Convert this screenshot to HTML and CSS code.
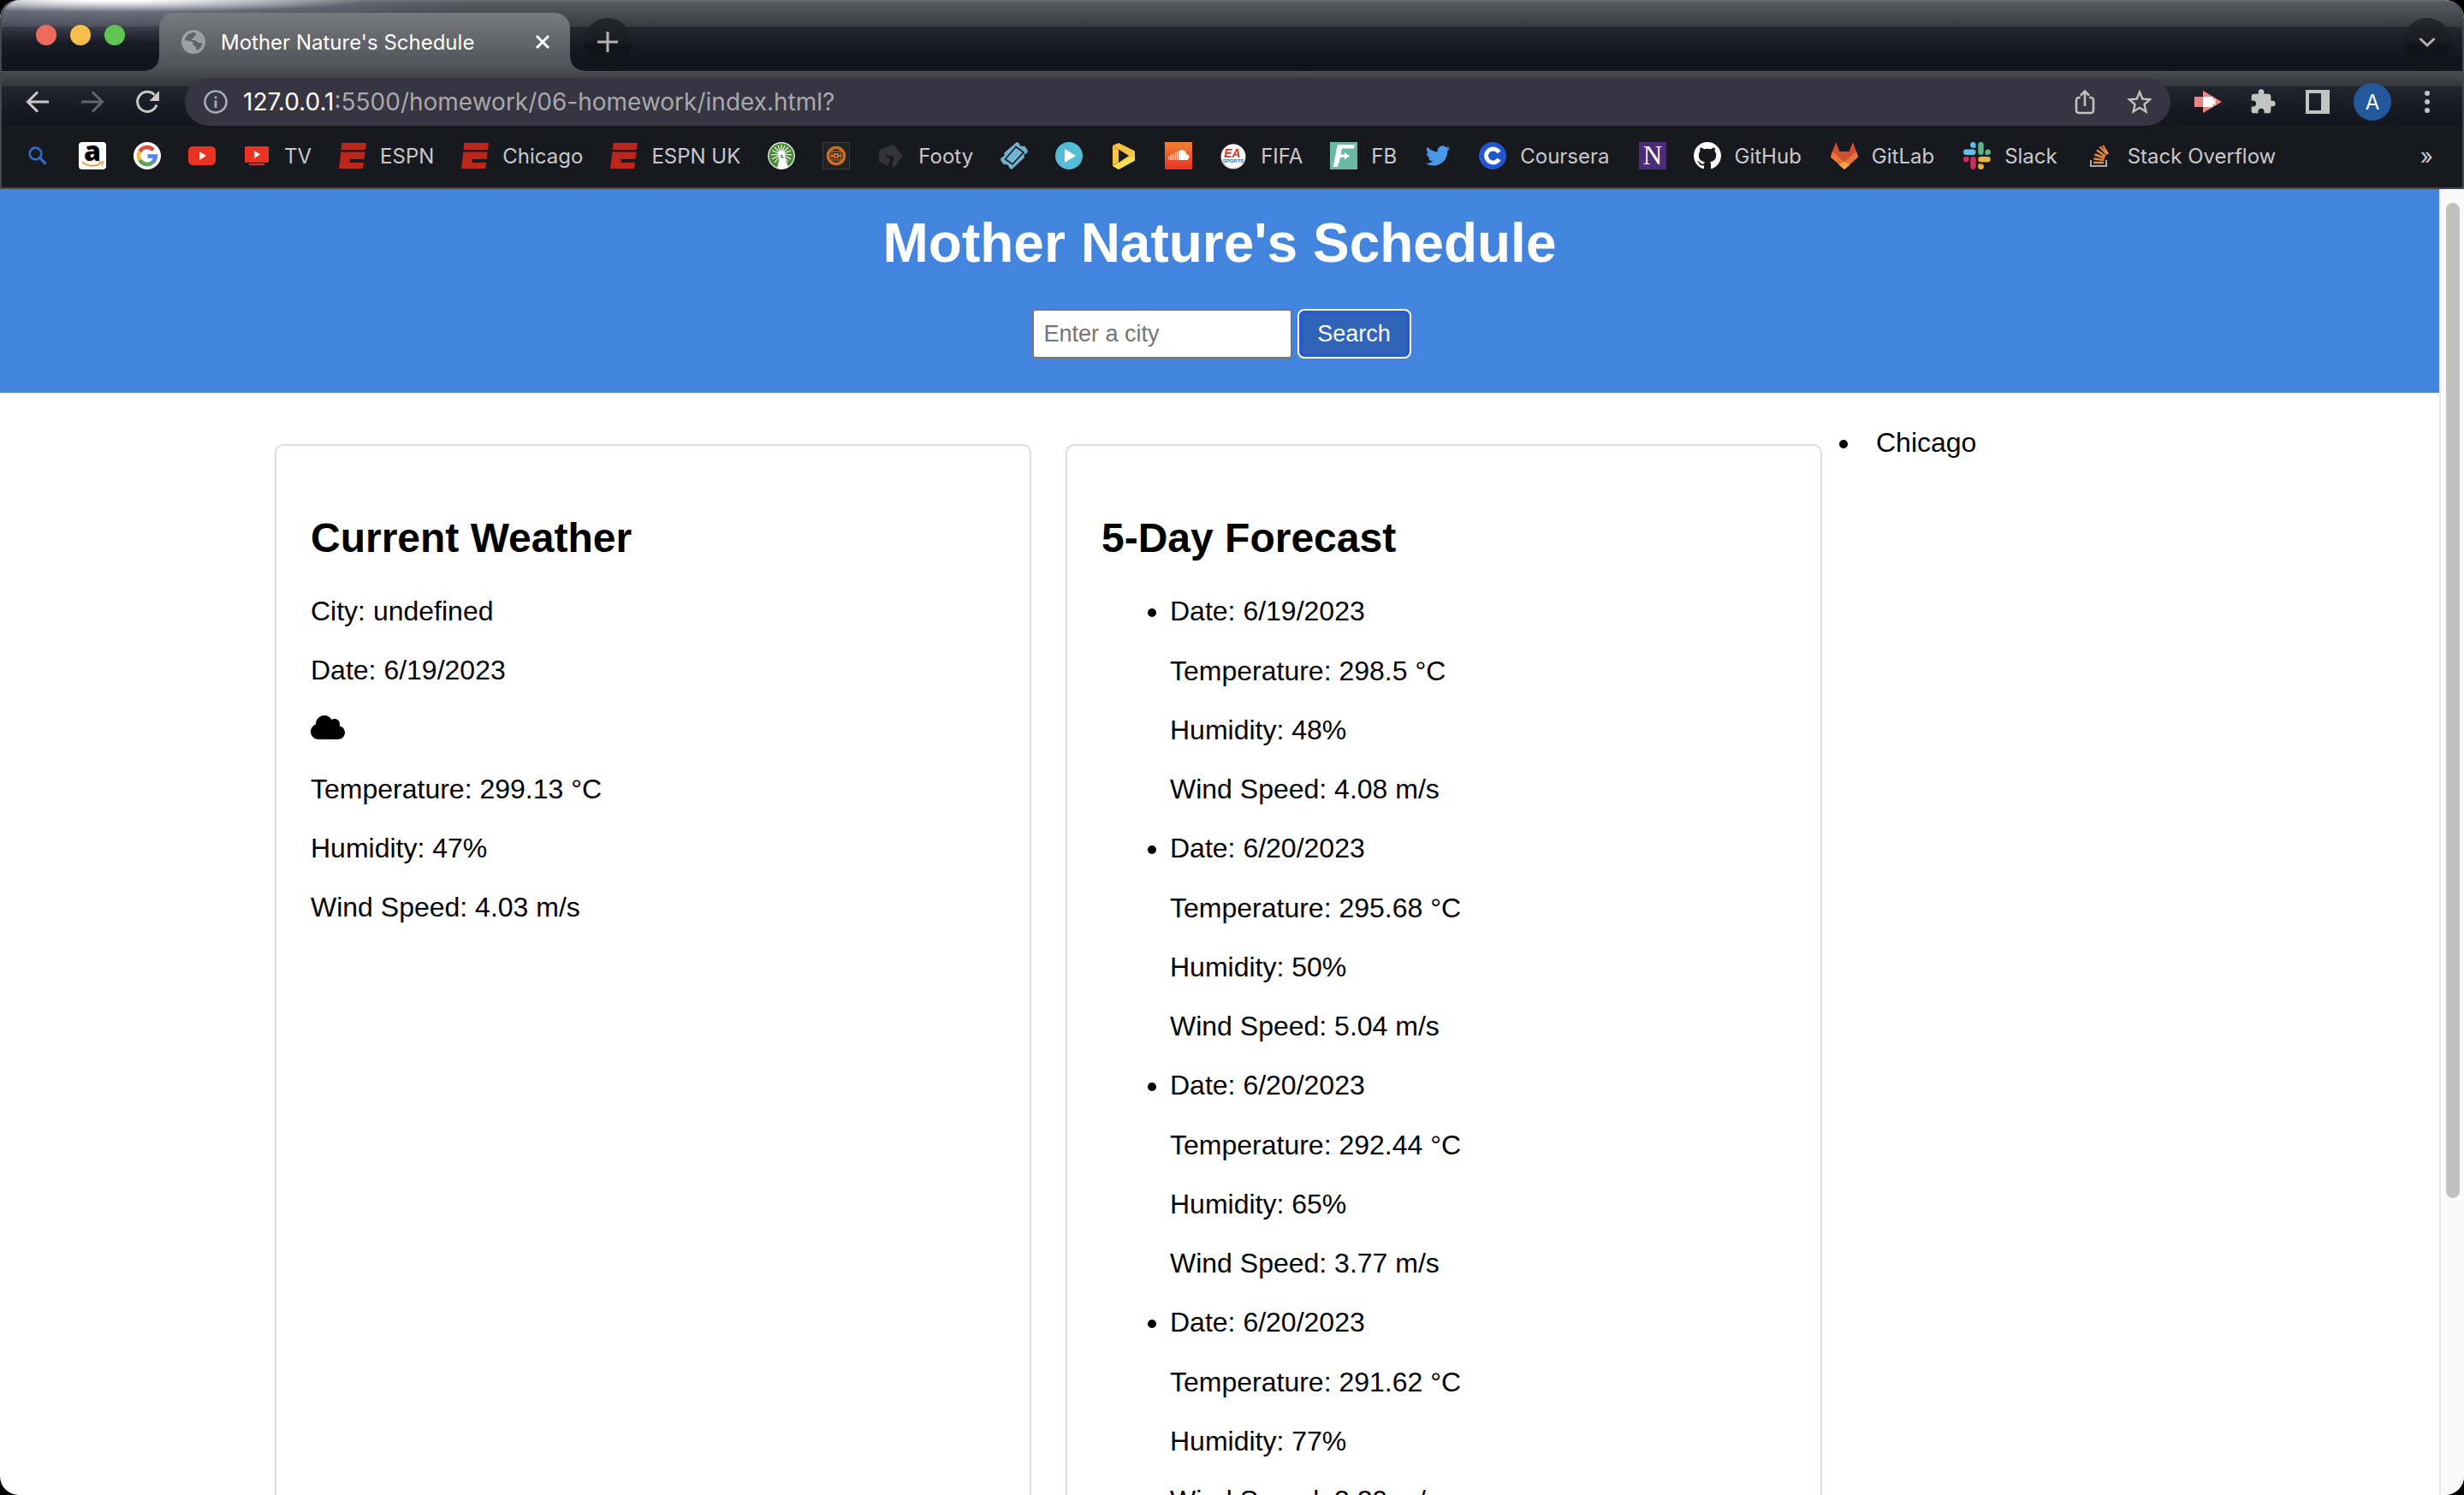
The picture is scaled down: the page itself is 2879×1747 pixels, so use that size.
FILE: index.html
```html
<!DOCTYPE html>
<html lang="en">
<head>
<meta charset="utf-8">
<meta name="viewport" content="width=device-width, initial-scale=1">
<title>Mother Nature's Schedule</title>
<link rel="stylesheet" href="styles.css">
</head>
<body>
<svg class="defs" aria-hidden="true">
  <symbol id="espn" viewBox="0 0 32 32"><path fill="#bb281b" d="M3.4 1H32l-1 8H2.6zM2.4 11.5H30.6l-1 8.500H13l-.6 4H29.200L28 31H0z"/></symbol>
</svg>
<div class="browser">
  <div class="tabstrip">
    <div class="lights"><span class="light red"></span><span class="light amber"></span><span class="light green"></span></div>
    <div class="tab">
      <svg class="i28" viewBox="0 0 28 28"><circle cx="14" cy="14" r="14" fill="#9aa0a6"/><path fill="#606369" d="M12 3.500c3-1 5 0 5 1.500s-2.500 2-2.500 3.500-2.500 1-2.500 2.500 3 .5 5 1.500 1.500 2.500 3.500 2.500 3-.5 4 .5c-.5 4-3 7-6 8.500-1.500-.5-1-2.500-1.500-4s-3-1-3.500-3 1-3-1-3.500-3 .5-4-.5-2.500-1-4.500-.5C4 8 8 4.500 12 3.500z"/></svg>
      <span class="tab-title">Mother Nature's Schedule</span>
      <button class="bare" aria-label="Close tab"><svg class="i20" viewBox="0 0 20 20"><path d="M3 3l14 14M17 3L3 17" stroke="#fff" stroke-width="3"/></svg></button>
    </div>
    <button class="round" aria-label="New tab"><svg class="i28" viewBox="0 0 28 28"><path d="M14 2v24M2 14h24" stroke="#b5b1ad" stroke-width="3"/></svg></button>
    <button class="round last" aria-label="Search tabs"><svg class="i28" viewBox="0 0 28 28"><path d="M5.500 10l8.500 8 8.500-8" fill="none" stroke="#b5b1ad" stroke-width="3"/></svg></button>
  </div>

  <div class="toolbar">
    <nav class="row">
      <button class="bare" aria-label="Back"><svg class="i32" viewBox="0 0 32 32"><path d="M29 16H5M16 4.500L4.500 16 16 27.500" fill="none" stroke="#cbc8c5" stroke-width="3"/></svg></button>
      <button class="bare" aria-label="Forward"><svg class="i32" viewBox="0 0 32 32"><path d="M3 16h24M16 4.500L27.500 16 16 27.500" fill="none" stroke="#66666a" stroke-width="3"/></svg></button>
      <button class="bare" aria-label="Reload"><svg class="i32" viewBox="0 0 32 32"><path d="M27 19.500A11.500 11.500 0 1 1 24.500 8" fill="none" stroke="#cbc8c5" stroke-width="3"/><path d="M30 3v12H18.500z" fill="#cbc8c5"/></svg></button>
    </nav>
    <div class="omnibox">
      <svg class="i32" viewBox="0 0 32 32"><circle cx="16" cy="16" r="12.500" fill="none" stroke="#a6adb4" stroke-width="2.600"/><path d="M14.600 14.500h2.800V23h-2.800zM14.600 9.500h2.800v2.800h-2.800z" fill="#a6adb4"/></svg>
      <span class="url"><span class="host">127.0.0.1</span>:5500/homework/06-homework/index.html?</span>
      <span class="row">
        <button class="bare" aria-label="Share"><svg class="i32" viewBox="0 0 32 32"><path d="M11 11H9a3 3 0 0 0-3 3v12a3 3 0 0 0 3 3h14a3 3 0 0 0 3-3V14a3 3 0 0 0-3-3h-2M16 21V4M11 8.500l5-5 5 5" fill="none" stroke="#c3c1bf" stroke-width="2.600"/></svg></button>
        <button class="bare" aria-label="Bookmark"><svg class="i32" viewBox="1.300 1 21.400 21.400"><path fill="#c3c1bf" d="M22 9.240l-7.190-.62L12 2 9.190 8.630 2 9.240l5.460 4.730L5.820 21 12 17.270 18.180 21l-1.630-7.030L22 9.240zM12 15.400l-3.760 2.270 1-4.280-3.320-2.880 4.380-.38L12 6.100l1.710 4.040 4.380.38-3.320 2.880 1 4.280L12 15.400z"/></svg></button>
      </span>
    </div>
    <div class="row">
      <button class="bare" aria-label="Recorder"><svg class="i32" viewBox="0 0 32 32"><path fill="#ef8582" d="M0 10h10V3l22 13-22 13v-7H0z"/><path fill="#fff" d="M10 12a2 2 0 0 1 2-2h8a2 2 0 0 1 2 2v2l2.500-2v8L22 18v2a2 2 0 0 1-2 2H10z"/></svg></button>
      <button class="bare" aria-label="Extensions"><svg class="i32" viewBox="0 0 24 24"><path fill="#c3c3c3" d="M20.500 11H19V7c0-1.100-.9-2-2-2h-4V3.500a2.500 2.500 0 0 0-5 0V5H4c-1.100 0-2 .9-2 2v3.800h1.500c1.490 0 2.700 1.210 2.700 2.700s-1.210 2.700-2.700 2.700H2V20c0 1.100.9 2 2 2h3.800v-1.500c0-1.490 1.210-2.700 2.700-2.700s2.700 1.210 2.700 2.700V22H17c1.100 0 2-.9 2-2v-4h1.500a2.500 2.500 0 0 0 0-5z"/></svg></button>
      <button class="bare" aria-label="Side panel"><svg class="i32" viewBox="0 0 32 32"><path fill="#c3c3c3" fill-rule="evenodd" d="M2 2h28v28H2zM6 6v20h14V6z"/></svg></button>
      <button class="avatar" aria-label="Profile">A</button>
      <button class="bare" aria-label="Menu"><svg class="i32" viewBox="0 0 32 32"><g fill="#c3c3c3"><circle cx="16" cy="6" r="3"/><circle cx="16" cy="16" r="3"/><circle cx="16" cy="26" r="3"/></g></svg></button>
    </div>
  </div>

  <div class="bookmarks">
    <a href="#" aria-label="Search"><svg class="i32" viewBox="0 0 32 32"><circle cx="13.500" cy="13.500" r="6.800" fill="none" stroke="#2f6ac1" stroke-width="2.800"/><path d="M18.500 18.500l7 7" stroke="#2f6ac1" stroke-width="3.200"/></svg></a>
    <a href="#" aria-label="Amazon"><svg class="i32" viewBox="0 0 32 32"><rect width="32" height="32" rx="4" fill="#fff"/><text x="16" y="22" text-anchor="middle" font-family="Open Sans, sans-serif" font-weight="800" font-size="32" letter-spacing="0">a</text><path d="M4 23.500c7 5.500 16 5.500 22 1.500" fill="none" stroke="#f29b38" stroke-width="2"/><path d="M23 23.500l5.500-.5-1.500 5" fill="none" stroke="#f29b38" stroke-width="1.500"/></svg></a>
    <a href="#" aria-label="Google"><svg class="i32" viewBox="0 0 32 32"><circle cx="16" cy="16" r="16" fill="#fff"/><g fill="none" stroke-width="4.600"><path stroke="#d85140" d="M23.200 9.400A10 10 0 0 0 7.300 11"/><path stroke="#f1be42" d="M7.300 11A10 10 0 0 0 7.300 21"/><path stroke="#58a55c" d="M7.300 21A10 10 0 0 0 22.600 23.500"/><path stroke="#5383ec" d="M22.600 23.500A10 10 0 0 0 25.800 16.500H16.500"/></g></svg></a>
    <a href="#" aria-label="YouTube"><svg class="i32" viewBox="0 0 32 32"><rect y="5" width="32" height="22" rx="5" fill="#ea3323"/><path fill="#fff" d="M13 11v10l8-5z"/></svg></a>
    <a href="#"><svg class="i32" viewBox="0 0 32 32"><rect x="2" y="5" width="28" height="19" rx="2" fill="#ea3323"/><path fill="#ea3323" d="M7 25h18v2H7z"/><path fill="#fff" d="M13 10v9l7-4.500z"/></svg>TV</a>
    <a href="#"><svg class="i32"><use href="#espn"/></svg>ESPN</a>
    <a href="#"><svg class="i32"><use href="#espn"/></svg>Chicago</a>
    <a href="#"><svg class="i32"><use href="#espn"/></svg>ESPN UK</a>
    <a href="#" aria-label="Fidelity"><svg class="i32" viewBox="0 0 32 32"><circle cx="16" cy="16" r="15.200" fill="#4a8b38" stroke="#dfe9dc" stroke-width="1.400"/><g stroke="#fff" stroke-width="1.100"><path d="M16 14V3M16 14l-4-10M16 14l4-10M16 14L8 6M16 14l8-8M16 14L5 10M16 14l11-4M16 14L4 15M16 14l12 1M16 14L5 20M16 14l11 6M16 14l-8 10M16 14l8 9"/></g><circle cx="16" cy="14" r="4" fill="#fff"/><path fill="#fff" d="M15 11h3l6 18.500a16 16 0 0 1-13 1.500z"/><path d="M15 18l1-4 3 5z" fill="#4a8b38"/></svg></a>
    <a href="#" aria-label="Basketball"><svg class="i32" viewBox="0 0 32 32"><rect x=".5" y=".5" width="31" height="31" fill="#222" stroke="#3c3c3c"/><circle cx="16" cy="16" r="9.500" fill="#222" stroke="#cb6f27" stroke-width="3.500"/><path fill="none" stroke="#8d531f" stroke-width="2" d="M11 11h10v10H11z"/><path fill="none" stroke="#cb6f27" stroke-width="2" d="M9 16h4m6 0h4M14 14h4v4h-4z"/></svg></a>
    <a href="#"><svg class="i32" viewBox="0 0 32 32"><path fill="#343434" d="M2 10L19 2.500 30 16 20 29.500l-3-1.500 2.500-10.500L11 15l-1 2 5 2-2 9.500L2 23z"/></svg>Footy</a>
    <a href="#" aria-label="Tickets"><svg class="i32" viewBox="0 0 32 32"><path fill="#71b2d2" d="M19 0l3 1.500q0 4 5 3.500l1-.5L32 10l-1 3q-5 1-3 5L13 32l-3-2q0-4-5-4l-1 .5L0 21l1-3q5-1 3-5z"/><path fill="none" stroke="#18191e" stroke-width="1.600" d="M18 5.500L27 12 14 26 5.500 20z"/></svg></a>
    <a href="#" aria-label="Player"><svg class="i32" viewBox="0 0 32 32"><circle cx="16" cy="16" r="16" fill="#54bcd6"/><path fill="#fff" d="M11 8v16l13-8z"/></svg></a>
    <a href="#" aria-label="Video"><svg class="i32" viewBox="0 0 32 32"><path fill="#f5c643" d="M3 4l7-3 19 9.500v11L10 32l-7-4z"/><path fill="#f6df51" d="M3 28l7-4 19-8v5.500L10 32z"/><path fill="#18191e" d="M10 8.500v15.500l12-8z"/><path d="M3 4l7 5M3 28l7-5" stroke="#b98d2c"/></svg></a>
    <a href="#" aria-label="SoundCloud"><svg class="i32" viewBox="0 0 32 32"><defs><linearGradient id="sc" x2="0" y2="1"><stop stop-color="#ef8234"/><stop offset="1" stop-color="#eb3324"/></linearGradient></defs><rect width="32" height="32" fill="url(#sc)"/><path stroke="#fff" stroke-width="1.200" d="M4.600 17v3.500M6.600 15v6M8.600 14v7M10.600 14.500v6.500M12.600 12v9M14.600 11v10"/><path fill="#fff" d="M16 10.500c4-3 9-.5 9.500 4 4-.5 4 6.500-.5 6.500h-9z"/></svg></a>
    <a href="#"><svg class="i32" viewBox="0 0 32 32"><circle cx="16" cy="17" r="14.500" fill="#e4e4e6"/><circle cx="16" cy="16" r="13.500" fill="#fbfbfb"/><g text-anchor="middle" font-weight="700" font-family="Liberation Sans, sans-serif"><text x="15" y="18" font-size="14" font-style="italic" fill="#cb3b2c">EA</text><text x="16" y="24" font-size="6" fill="#3f6fae">SPORTS</text></g></svg>FIFA</a>
    <a href="#"><svg class="i32" viewBox="0 0 32 32"><rect width="32" height="32" fill="#6bb9a4"/><path fill="#fff" d="M9 3h20l-1 4.500H14l-1.500 7H17V12l6 4.500-6 4V18h-5L9 29H3.500z"/></svg>FB</a>
    <a href="#" aria-label="Twitter"><svg class="i32" viewBox="-1.500 -1.500 27 27"><path fill="#4a99e9" d="M23.953 4.570a10 10 0 01-2.825.775 4.958 4.958 0 002.163-2.723c-.951.555-2.005.959-3.127 1.184a4.920 4.920 0 00-8.384 4.482C7.690 8.095 4.067 6.130 1.640 3.162a4.822 4.822 0 00-.666 2.475c0 1.710.87 3.213 2.188 4.096a4.904 4.904 0 01-2.228-.616v.06a4.923 4.923 0 003.946 4.827 4.996 4.996 0 01-2.212.085 4.936 4.936 0 004.604 3.417 9.867 9.867 0 01-6.102 2.105c-.39 0-.779-.023-1.170-.067a13.995 13.995 0 007.557 2.209c9.053 0 13.998-7.496 13.998-13.985 0-.21 0-.42-.015-.63A9.935 9.935 0 0024 4.590z"/></svg></a>
    <a href="#" class="wide"><svg class="i32" viewBox="0 0 32 32"><circle cx="16" cy="16" r="16" fill="#2156d1"/><path d="M23.500 12a8 8 0 1 0 0 8" fill="none" stroke="#fff" stroke-width="4.800"/></svg>Coursera</a>
    <a href="#" aria-label="Northwestern"><svg class="i32" viewBox="0 0 32 32"><rect width="32" height="32" fill="#492d7b"/><text x="16" y="26" text-anchor="middle" font-family="Liberation Serif, serif" font-size="31" fill="#fff">N</text></svg></a>
    <a href="#" class="wide"><svg class="i32" viewBox="0 0 16 16"><path fill="#fff" d="M8 0C3.580 0 0 3.580 0 8c0 3.540 2.290 6.530 5.470 7.590.4.07.55-.17.55-.38 0-.19-.01-.82-.01-1.490-2.010.37-2.530-.49-2.690-.94-.09-.23-.48-.94-.82-1.130-.28-.15-.68-.52-.01-.53.63-.01 1.080.58 1.230.82.72 1.210 1.870.87 2.330.66.07-.52.28-.87.51-1.070-1.780-.2-3.640-.89-3.640-3.950 0-.87.31-1.590.82-2.150-.08-.2-.36-1.020.08-2.120 0 0 .67-.21 2.200.82.64-.18 1.320-.27 2-.27s1.360.09 2 .27c1.530-1.040 2.200-.82 2.200-.82.44 1.100.16 1.920.08 2.120.51.56.82 1.270.82 2.150 0 3.070-1.870 3.750-3.650 3.950.29.25.54.73.54 1.480 0 1.070-.01 1.930-.01 2.200 0 .21.15.46.55.38A8.010 8.010 0 0 0 16 8c0-4.420-3.580-8-8-8z"/></svg>GitHub</a>
    <a href="#" class="wide"><svg class="i32" viewBox="0 0 32 32"><path fill="#ce5030" d="M6 0l4.500 11h11L26 0l6 17L16 32 0 17z"/><path fill="#e9753a" d="M2 11l14 12.500L30 11l2 6.500L16 32 0 17.500z"/><path fill="#f0a844" d="M16 23l6.500 3.500L16 32l-6.500-5.500z"/></svg>GitLab</a>
    <a href="#" class="wide"><svg class="i32" viewBox="0 0 32 32"><path fill="#63c0eb" d="M11.500 0a3 3 0 0 1 3 3.400v3.400h-3a3.400 3.400 0 0 1 0-6.800zM3.300 8.500h8a3.200 3.200 0 0 1 0 6.500h-8a3.200 3.200 0 0 1 0-6.500z"/><path fill="#59b585" d="M20.500 0a3.200 3.200 0 0 1 3.200 3.200v8.500a3.200 3.200 0 0 1-6.400 0V3.200A3.200 3.200 0 0 1 20.500 0zM28.700 8.500a3.200 3.200 0 0 1 0 6.500h-3.200v-3.200a3.200 3.200 0 0 1 3.200-3.300z"/><path fill="#e4b34c" d="M20.500 17h8a3.200 3.200 0 0 1 0 6.500h-8a3.200 3.200 0 0 1 0-6.500zM17.300 25.400h3.200a3.300 3.300 0 1 1-3.200 3.200z"/><path fill="#cc2d5b" d="M11.500 17a3.200 3.200 0 0 1 3.200 3.200v8.600a3.200 3.200 0 0 1-6.400 0v-8.600a3.200 3.200 0 0 1 3.200-3.200zM3.300 17h3.200v3.200A3.250 3.250 0 1 1 3.300 17z"/></svg>Slack</a>
    <a href="#"><svg class="i32" viewBox="0 0 32 32"><path fill="none" stroke="#a9abae" stroke-width="2" d="M5 21v7h18v-7"/><path stroke="#e8873a" stroke-width="2.400" d="M8 24h12M8.200 19.400l12 1.600M9.500 14.500l11.500 4M12 9.500l10 7M15.500 5.500l8.500 9M19 4l6 10"/></svg>Stack Overflow</a>
    <button class="bare more" aria-label="More bookmarks">»</button>
  </div>

  <div class="viewport">
    <div class="page">
      <header class="banner">
        <h1>Mother Nature's Schedule</h1>
        <form class="search" onsubmit="return false">
          <input type="text" placeholder="Enter a city" aria-label="City">
          <button>Search</button>
        </form>
      </header>
      <main>
        <section class="card">
          <h2>Current Weather</h2>
          <p>City: undefined</p>
          <p>Date: 6/19/2023</p>
          <p class="cloud"><svg viewBox="0 0 640 512"><path d="M0 336c0 79.500 64.500 144 144 144H512c70.700 0 128-57.300 128-128c0-61.900-44-113.600-102.400-125.400c4.100-10.700 6.400-22.400 6.400-34.600c0-53-43-96-96-96c-19.700 0-38.100 6-53.300 16.200C367 64.200 315.300 32 256 32C167.600 32 96 103.600 96 192c0 2.700 .1 5.400 .2 8.100C40.200 219.800 0 273.200 0 336z"/></svg></p>
          <p>Temperature: 299.13 °C</p>
          <p>Humidity: 47%</p>
          <p>Wind Speed: 4.03 m/s</p>
        </section>
        <section class="card">
          <h2>5-Day Forecast</h2>
          <ul class="forecast">
            <li><p class="date">Date: 6/19/2023</p><p>Temperature: 298.5 °C</p><p>Humidity: 48%</p><p>Wind Speed: 4.08 m/s</p></li>
            <li><p class="date">Date: 6/20/2023</p><p>Temperature: 295.68 °C</p><p>Humidity: 50%</p><p>Wind Speed: 5.04 m/s</p></li>
            <li><p class="date">Date: 6/20/2023</p><p>Temperature: 292.44 °C</p><p>Humidity: 65%</p><p>Wind Speed: 3.77 m/s</p></li>
            <li><p class="date">Date: 6/20/2023</p><p>Temperature: 291.62 °C</p><p>Humidity: 77%</p><p>Wind Speed: 3.29 m/s</p></li>
          </ul>
        </section>
        <ul class="history"><li>Chicago</li></ul>
      </main>
    </div>
    <div class="scrollbar"><div class="thumb"></div></div>
  </div>
</div>
</body>
</html>
```
FILE: styles.css
```css
* { box-sizing: border-box; }
html, body { height: 100%; }
body { margin: 0; background: #000; overflow: hidden; font-family: "Liberation Sans", Arial, sans-serif; font-size: 32px; line-height: 37px; color: #000; }
p, h1, h2, ul { margin: 0; padding: 0; }
svg { display: block; flex: none; }
.defs { position: absolute; width: 0; height: 0; }
.i20 { width: 20px; height: 20px; }
.i28 { width: 28px; height: 28px; }
.i32 { width: 32px; height: 32px; }
.bare { background: none; border: 0; padding: 0; flex: none; }
.row { display: flex; align-items: center; gap: 32px; }

.browser { height: 100vh; display: flex; flex-direction: column; overflow: hidden; border-radius: 22px; background: #fff; }
.tabstrip, .toolbar, .bookmarks { flex: none; display: flex; align-items: center; font-family: Inter, "Noto Sans", sans-serif; box-shadow: inset 2px 0 #45474d, inset -2px 0 #45474d; }

/* Tab strip */
.tabstrip {
  height: 83px; padding: 15px 15px 0 42px; align-items: flex-start;
  border-radius: 22px 22px 0 0;
  background:
    radial-gradient(ellipse 300px 14px at 135px 0, #fff 10%, #fff0),
    radial-gradient(ellipse 420px 50px at 130px 0, #a5a6c080, #a5a6c000),
    linear-gradient(#6c6f76 0, #565960 3px, #393b43 31px, #24272f 31px, #181b24 52px, #10131b 76px, #16171b 83px);
}
.lights { display: flex; gap: 16px; margin: 14px 40px 0 0; }
.light { width: 24px; height: 24px; border-radius: 50%; }
.red { background: #ec6a5e; }
.amber { background: #f4bf4f; }
.green { background: #61c554; }
.tab { position: relative; width: 480px; height: 68px; padding: 0 22px 0 26px; display: flex; align-items: center; gap: 18px; border-radius: 18px 18px 0 0; background: linear-gradient(#7a7b80, #6b6d72 20px, #52555c 60px, #4c4e53); }
.tab::before, .tab::after { content: ""; position: absolute; bottom: 0; width: 16px; height: 16px; }
.tab::before { right: 100%; background: radial-gradient(circle at 0 0, #0000 15px, #4f5157 16px); }
.tab::after { left: 100%; background: radial-gradient(circle at 100% 0, #0000 15px, #4f5157 16px); }
.tab-title { flex: 1; font-size: 24px; color: #fff; white-space: nowrap; }
.round { width: 56px; height: 56px; margin: 6px 0 0 16px; padding: 0; border: 0; border-radius: 50%; display: grid; place-items: center; background: linear-gradient(#25272e, #1c1d22 24px, #10131a 34px, #14161b); }
.last { margin-left: auto; }

/* Toolbar */
.toolbar { height: 64px; padding: 8px 27px 0 28px; gap: 28px; background: linear-gradient(#4a4c51, #34373d 18px, #22252e 18px, #171a22 46px, #13161d); }
.omnibox { flex: 1; min-width: 0; height: 56px; padding: 0 20px; display: flex; align-items: center; gap: 16px; border-radius: 28px; background: #363541; }
.url { flex: 1; min-width: 0; overflow: hidden; font-size: 28px; color: #a9a8ad; white-space: nowrap; }
.host { color: #fff; }
.avatar { width: 44px; height: 44px; margin: 0 -6px; padding: 0; border: 0; border-radius: 50%; background: #23589b; color: #fff; font: 24px Inter, "Noto Sans", sans-serif; }

/* Bookmarks bar */
.bookmarks { height: 74px; padding: 0 36px 2px 28px; gap: 32px; background: #18191e; border-bottom: 2px solid #484850; }
.bookmarks a { flex: none; display: flex; align-items: center; gap: 16px; color: #c9c8cc; font-size: 24px; text-decoration: none; white-space: nowrap; }
.bookmarks .wide { margin-right: 2px; }
.more { margin-left: auto; color: #c9c8cc; font: 26px Inter, "Noto Sans", sans-serif; }

/* Page area */
.viewport { flex: 1; min-height: 0; display: flex; overflow: hidden; }
.page { flex: 1; min-width: 0; height: 100%; overflow: hidden; }
.scrollbar { width: 29px; padding: 16px 5px 0 6px; background: #fafafa; border-left: 2px solid #e8e8e8; }
.thumb { height: 77%; border-radius: 8px; background: #c1c1c1; }

.banner { padding: 26px 0 40px; background: #4385de; color: #fff; text-align: center; }
.banner h1 { font-size: 64px; line-height: 74px; margin-bottom: 40px; }
.search { display: flex; justify-content: center; gap: 6px; padding-left: 4px; }
.search input, .search button { height: 58px; font: 27px "Liberation Sans", Arial, sans-serif; }
.search input { width: 304px; padding: 0 12px; border: 2px solid #767676; border-radius: 4px; background: #fff; }
.search input::placeholder { color: #757575; opacity: 1; }
.search button { width: 133px; padding: 0; border: 2px solid #fff; border-radius: 8px; background: #2f64b9; color: #fff; box-shadow: inset 0 0 0 4px #285bc6; }

main { display: grid; grid-template-columns: 924fr 924fr 400fr; max-width: 2248px; margin: 0 auto; padding-top: 40px; }
.card { margin: 20px; padding: 40px; border: 2px solid #ddd; border-radius: 10px; }
.card h2 { font-size: 48px; line-height: 55px; margin: 40px 0; }
.card p { margin-bottom: 32px; }
.card .date { margin-bottom: 33px; }
.cloud { height: 38px; }
.cloud svg { width: 40px; height: 32px; }
.forecast { padding-left: 80px; }
.history li { margin-left: 26px; padding-left: 17px; }
```
